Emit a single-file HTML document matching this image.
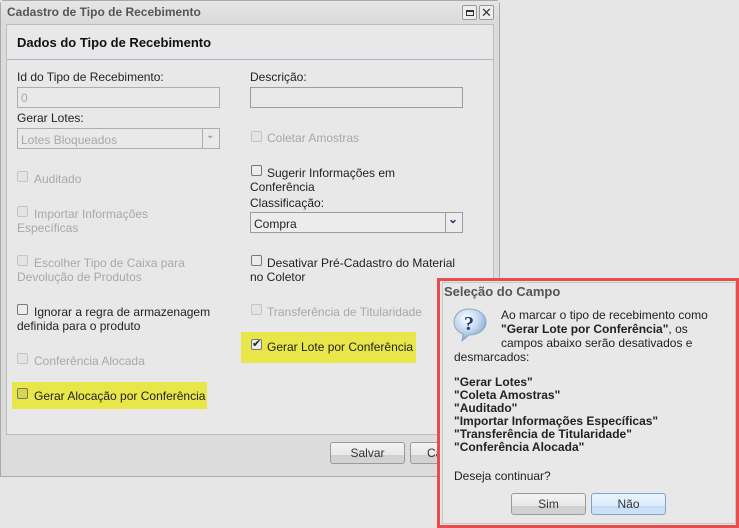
<!DOCTYPE html>
<html><head><meta charset="utf-8"><style>
*{margin:0;padding:0;box-sizing:border-box}
body{width:739px;height:528px;background:#e6e6e6;font-family:"Liberation Sans",sans-serif;font-size:12px;color:#222;position:relative;overflow:hidden}
.a{position:absolute;white-space:nowrap}
.dis{color:#a8a8a8}
.cb{position:absolute;width:11px;height:11px;border:1px solid #c4c4c4;border-radius:2px;background:#e4e4e4}
.cb.en{border-color:#777;background:#ececec}
.inp{position:absolute;border:1px solid #abadb3;background:#e9e9e9;height:21px}
.btn{position:absolute;height:22px;border:1px solid #9a9a9a;border-radius:3px;background:linear-gradient(#f2f2f2 0,#e8e8e8 60%,#cfcfcf 61%,#d4d4d4 100%);text-align:center;line-height:20px;color:#333}
.hl{position:absolute;background:#e8e649}
</style></head><body>
<!-- main dialog -->
<div class="a" style="left:0;top:0;width:500px;height:477px;border:1px solid #a9a9a9;border-radius:4px 4px 0 0;background:#dcdcdc"></div>
<div class="a" style="left:1px;top:1px;width:498px;height:23px;background:linear-gradient(#e6e6e6,#dadada)"></div>
<div class="a" style="left:7px;top:5px;font-weight:bold;color:#555;font-size:12px">Cadastro de Tipo de Recebimento</div>
<div class="a" style="left:462px;top:5px;width:15px;height:15px;border:1px solid #999;border-radius:2px;background:#eee"><div style="position:absolute;left:3px;top:4px;width:8px;height:6px;border:1px solid #333;border-top-width:2px"></div></div>
<div class="a" style="left:479px;top:5px;width:15px;height:15px;border:1px solid #999;border-radius:2px;background:#eee;text-align:center;line-height:13px;font-size:13px;color:#333">✕</div>
<div class="a" style="left:6px;top:24px;width:488px;height:411px;border:1px solid #bdbdbd;background:#e8e8e8"></div>
<div class="a" style="left:7px;top:59px;width:486px;height:1px;background:#a9b7cf"></div>
<div class="a" style="left:17px;top:35px;font-weight:bold;font-size:13px;color:#111">Dados do Tipo de Recebimento</div>

<div class="a" style="left:17px;top:70px">Id do Tipo de Recebimento:</div>
<div class="inp" style="left:17px;top:87px;width:203px"></div>
<div class="a dis" style="left:21px;top:91px">0</div>
<div class="a" style="left:250px;top:70px">Descrição:</div>
<div class="inp" style="left:250px;top:87px;width:213px;border-color:#9a9ca2"></div>

<div class="a" style="left:17px;top:111px">Gerar Lotes:</div>
<div class="inp" style="left:17px;top:128px;width:203px"></div>
<div class="a" style="left:202px;top:129px;width:1px;height:19px;background:#abadb3"></div>
<div class="a" style="left:206px;top:130px;color:#6a7fa6;font-size:10px">⌄</div>
<div class="a dis" style="left:21px;top:133px">Lotes Bloqueados</div>

<div class="cb" style="left:251px;top:131px"></div><div class="a dis" style="left:267px;top:131px">Coletar Amostras</div>

<div class="cb" style="left:17px;top:171px"></div><div class="a dis" style="left:34px;top:172px">Auditado</div>

<div class="cb en" style="left:251px;top:165px"></div><div class="a" style="left:267px;top:166px">Sugerir Informações em</div>
<div class="a" style="left:250px;top:180px">Conferência</div>
<div class="a" style="left:250px;top:196px">Classificação:</div>
<div class="inp" style="left:250px;top:212px;width:213px;background:#ececec;border-color:#9a9ca2"></div>
<div class="a" style="left:445px;top:213px;width:1px;height:19px;background:#9a9ca2"></div>
<div class="a" style="left:448px;top:212px;color:#1e3a70;font-size:12px;font-weight:bold">⌄</div>
<div class="a" style="left:254px;top:217px">Compra</div>

<div class="cb" style="left:17px;top:206px"></div><div class="a dis" style="left:34px;top:207px">Importar Informações</div>
<div class="a dis" style="left:17px;top:221px">Específicas</div>

<div class="cb" style="left:17px;top:255px"></div><div class="a dis" style="left:34px;top:256px">Escolher Tipo de Caixa para</div>
<div class="a dis" style="left:17px;top:270px">Devolução de Produtos</div>

<div class="cb en" style="left:251px;top:255px"></div><div class="a" style="left:267px;top:256px">Desativar Pré-Cadastro do Material</div>
<div class="a" style="left:250px;top:270px">no Coletor</div>

<div class="cb en" style="left:17px;top:304px"></div><div class="a" style="left:34px;top:305px">Ignorar a regra de armazenagem</div>
<div class="a" style="left:17px;top:319px">definida para o produto</div>

<div class="cb" style="left:251px;top:304px"></div><div class="a dis" style="left:267px;top:305px">Transferência de Titularidade</div>

<div class="hl" style="left:241px;top:332px;width:175px;height:31px"></div>
<div class="cb en" style="left:251px;top:339px;font-size:11px;line-height:9px;text-align:center;color:#222">✔</div>
<div class="a" style="left:267px;top:340px">Gerar Lote por Conferência</div>

<div class="cb" style="left:17px;top:353px"></div><div class="a dis" style="left:34px;top:354px">Conferência Alocada</div>

<div class="hl" style="left:12px;top:382px;width:195px;height:27px"></div>
<div class="cb en" style="left:17px;top:388px;background:#d8d64a"></div><div class="a" style="left:34px;top:389px">Gerar Alocação por Conferência</div>

<div class="btn" style="left:330px;top:442px;width:75px">Salvar</div>
<div class="btn" style="left:410px;top:442px;width:75px;text-align:left;padding-left:16px">Cancelar</div>

<!-- popup -->
<div class="a" style="left:437px;top:278px;width:302px;height:250px;border:3px solid #e84c4c;background:#e6e6e6"></div>
<div class="a" style="left:442px;top:282px;width:294px;height:242px;border:1px solid #c8c8c8;background:#e8e8e8"></div>
<div class="a" style="left:444px;top:284px;font-weight:bold;font-size:13px;color:#555">Seleção do Campo</div>
<svg class="a" style="left:452px;top:307px" width="36" height="36" viewBox="0 0 36 36">
<defs><radialGradient id="g" cx="40%" cy="30%" r="70%"><stop offset="0" stop-color="#ffffff"/><stop offset="0.6" stop-color="#bcd3ec"/><stop offset="1" stop-color="#7ea4cc"/></radialGradient></defs>
<path d="M17 2C8 2 2 8 2 15c0 6 4 10 9 12l-1 7 7-6c9 0 17-5 17-13S26 2 17 2z" fill="url(#g)" stroke="#8aa8c8"/>
<text x="17" y="23" text-anchor="middle" font-family="Liberation Serif" font-weight="bold" font-size="20" fill="#1a3d7a">?</text>
</svg>
<div class="a" style="left:501px;top:308px;line-height:14px">Ao marcar o tipo de recebimento como<br><b>"Gerar Lote por Conferência"</b>, os<br>campos abaixo serão desativados e</div>
<div class="a" style="left:454px;top:350px">desmarcados:</div>
<div class="a" style="left:454px;top:376px;font-weight:bold;line-height:13px">"Gerar Lotes"<br>"Coleta Amostras"<br>"Auditado"<br>"Importar Informações Específicas"<br>"Transferência de Titularidade"<br>"Conferência Alocada"</div>
<div class="a" style="left:454px;top:469px">Deseja continuar?</div>
<div class="btn" style="left:511px;top:493px;width:75px">Sim</div>
<div class="btn" style="left:591px;top:493px;width:75px;border-color:#7da2ce;background:linear-gradient(#eaf4fc,#dcecfc 60%,#c4dcf4 61%,#cfe3f7)">Não</div>
</body></html>
